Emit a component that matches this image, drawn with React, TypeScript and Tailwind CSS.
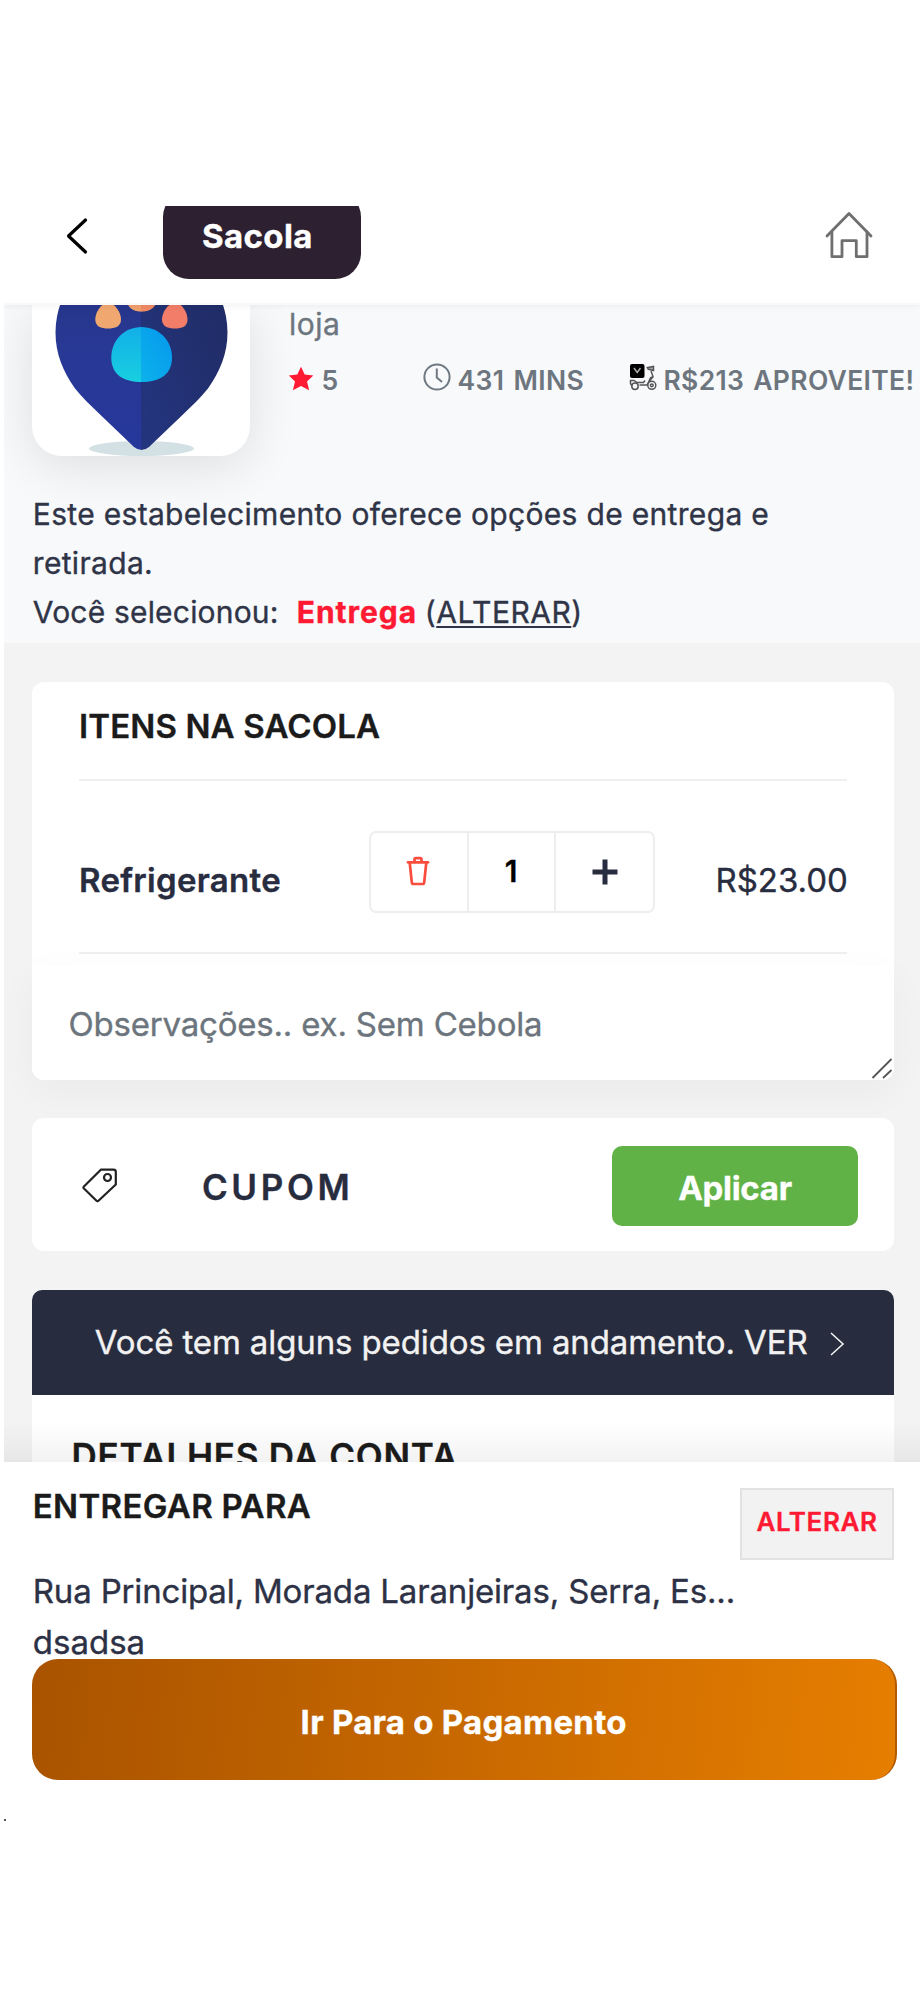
import React from "react";

function BackIcon() {
  return (
    <svg width="30" height="44" viewBox="0 0 30 44" fill="none" stroke="#000" strokeWidth="3.2" strokeLinecap="round" strokeLinejoin="round">
      <path d="M23.5 6 6.5 22l17 16" />
    </svg>
  );
}

function HomeIcon() {
  return (
    <svg width="50" height="50" viewBox="0 0 50 50" fill="none" stroke="#6f6f6f" strokeWidth="2.8" strokeLinecap="round" strokeLinejoin="round">
      <path d="M3 26 25 3.400 47 26" />
      <path d="M7.900 22V46.700H18V30.700H32.300V46.700H43V22" />
    </svg>
  );
}

function StoreLogo() {
  return (
    <svg width="218" height="152" viewBox="32 304.500 218 152">
      <defs>
        <linearGradient id="pinL" x1="0" y1="0" x2="0" y2="1">
          <stop offset="0" stopColor="#25327e" />
          <stop offset=".5" stopColor="#283895" />
          <stop offset="1" stopColor="#26379b" />
        </linearGradient>
        <linearGradient id="pinR" x1="1" y1="0" x2="0" y2="1">
          <stop offset="0" stopColor="#202b62" />
          <stop offset="1" stopColor="#243580" />
        </linearGradient>
        <linearGradient id="padL" x1="0" y1="0" x2="0" y2="1">
          <stop offset="0" stopColor="#12afe8" />
          <stop offset="1" stopColor="#18cfe0" />
        </linearGradient>
        <linearGradient id="padR" x1="1" y1="0" x2="0" y2="1">
          <stop offset="0" stopColor="#0597ee" />
          <stop offset="1" stopColor="#0cb2ea" />
        </linearGradient>
      </defs>
      <ellipse cx="141.500" cy="448" rx="52.500" ry="7.500" fill="#d3e1e4" />
      <path d="M142 246H141.500A86 86 0 0 0 55.500 332C55.500 353 63 371 75 388C82 397 91 405 99 413L134 446.500Q137.500 449.500 142 449.500Z" fill="url(#pinL)" />
      <path d="M141 246H141.500A86 86 0 0 1 227.500 332C227.500 353 220 371 208 388C201 397 192 405 184 413L149 446.500Q145.500 449.500 141 449.500Z" fill="url(#pinR)" />
      <path d="M142 326.500C123 326.500 111.300 341 111.300 357C111.300 374 123 381.500 142 381.500Z" fill="url(#padL)" />
      <path d="M141 326.500C160 326.500 172 341 172 357C172 374 160 381.500 141 381.500Z" fill="url(#padR)" />
      <path d="M108 302.500C101 302.500 95.300 312 95.300 319C95.300 326 101 328 108 328S121 326 121 319C121 312 115 302.500 108 302.500Z" fill="#f0a770" />
      <path d="M175 302.500C168 302.500 162 312 162 319C162 326 168 328 175 328S187.500 326 187.500 319C187.500 312 182 302.500 175 302.500Z" fill="#f27d68" />
      <path d="M128 304C130 309 135 311 142 311V304Z" fill="#f0a06c" />
      <path d="M155.500 304C153 309 148 311 141 311V304Z" fill="#ef8a66" />
    </svg>
  );
}

function StarIcon() {
  return (
    <svg width="26" height="25" viewBox="0 0 26 25" fill="#ff1a33">
      <path d="M13 .8 16.700 8.600 25.300 9.600 19 15.600 21.200 24.200 13 20 4.900 24.200 7 15.600 .8 9.600 9.300 8.600Z" />
    </svg>
  );
}

function ClockIcon() {
  return (
    <svg width="28" height="28" viewBox="0 0 28 28" fill="none" stroke="#6f7982" strokeWidth="2">
      <circle cx="14" cy="14" r="12.600" />
      <path d="M13.800 5.500V14.500L19 19" />
    </svg>
  );
}

function ScooterIcon() {
  return (
    <svg width="28" height="28" viewBox="0 0 28 28" fill="none" stroke="#555" strokeWidth="1.500">
      <rect x="1" y="1" width="14.500" height="14" rx="2" fill="#000" stroke="none" />
      <path d="M5 5 8.200 9.500 11.500 5" stroke="#aaa" strokeWidth="1.500" />
      <path d="M17.500 4.800 24.500 3.500V7.500L18.500 6" fill="#aaa" />
      <path d="M22 8 24 13.500 20 18.500 18 22H10.500" />
      <path d="M20 19C21 14.500 22.500 13 24 15" />
      <path d="M1.500 20V17.500H5L8 19.500H14.500L16 17.500" />
      <circle cx="6" cy="23.200" r="3.200" />
      <circle cx="22.800" cy="22.300" r="4" />
      <circle cx="22.800" cy="22.300" r="1.400" />
      <path d="M1.200 20 3 23" />
    </svg>
  );
}

function TrashIcon() {
  return (
    <svg width="24" height="30" viewBox="0 0 24 30" fill="none" stroke="#fb4d3d" strokeWidth="2.700" strokeLinejoin="round" strokeLinecap="round">
      <path d="M2 6.300H22" />
      <path d="M8.500 6V3.500Q8.500 2.200 9.800 2.200H14.200Q15.500 2.200 15.500 3.500V6" />
      <path d="M3.700 6.500 5.800 26.300Q6 28 7.500 28H16.500Q18 28 18.200 26.300L20.300 6.500" />
    </svg>
  );
}

function TagIcon() {
  return (
    <svg width="38" height="38" viewBox="0 0 38 38" fill="none" stroke="#222" strokeWidth="2.200" strokeLinejoin="round">
      <path d="M19.800 2.700H32.500Q34.800 2.700 34.800 5V17.500L17.500 33.800Q16.500 34.700 15.500 33.800L2.700 21.300Q2 20.500 2.700 19.700Z" />
      <circle cx="26.500" cy="10.500" r="3.500" />
    </svg>
  );
}

function Header() {
  return (
    <header className="relative z-10 h-[99px] shrink-0 border-b-2 border-[#f9f9f9] bg-white shadow-[0_1px_6px_rgba(0,0,0,0.06)]">
      <div className="flex h-full overflow-hidden">
        <button className="mt-2 ml-[58px] h-11">
          <BackIcon />
        </button>
        <div className="mt-[-15px] ml-[71.4px] h-[87.5px] w-[197.5px] shrink-0 rounded-[26px] bg-[#2d2030] pt-[24.5px] pl-[38.600px]">
          <span className="block text-[33px] leading-10 font-bold tracking-[0.4px] text-white">Sacola</span>
        </div>
        <button className="mt-[4px] mr-[46px] ml-auto h-[50px]">
          <HomeIcon />
        </button>
      </div>
    </header>
  );
}

function StoreInfo() {
  return (
    <section className="h-[338px] shrink-0 bg-[#f8f9fb] pl-[28.4px]">
      <div className="flex h-[151px]">
        <div className="w-[218px] shrink-0 overflow-hidden rounded-b-[30px] bg-white shadow-[0_10px_50px_rgba(0,0,0,0.11)]">
          <StoreLogo />
        </div>
        <div className="ml-[38.600px] whitespace-nowrap text-[#6d767e]">
          <p className="text-[30px] leading-[38px] tracking-[0.5px]">loja</p>
          <div className="mt-[20.7px] flex text-[26.5px] leading-8 font-semibold [-webkit-text-stroke:0px]">
            <div className="mt-[2px] -ml-px">
              <StarIcon />
            </div>
            <span className="ml-[7.5px] w-[101.5px]">5</span>
            <div className="-mt-[0.7px]">
              <ClockIcon />
            </div>
            <span className="ml-[6.5px] w-[171.5px] tracking-[0.4px] [word-spacing:2px]">431 MINS</span>
            <div className="-mt-[0.7px]">
              <ScooterIcon />
            </div>
            <span className="ml-[6.5px] tracking-[0.33px] [word-spacing:2px]">R$213 APROVEITE!</span>
          </div>
        </div>
      </div>
      <div className="relative mt-[34px] pl-[0.4px] text-[30px] leading-[49px] text-[#2f3447]">
        <p className="w-[780px] tracking-[0.32px]">Este estabelecimento oferece opções de entrega e retirada.</p>
        <p className="flex whitespace-nowrap">
          <span className="w-[264px] tracking-[0.19px]">Você selecionou:</span>
          <span className="w-[128px] font-bold tracking-[0.95px] text-[#ff1a33]">Entrega</span>
          <span className="tracking-[0.51px]">
            (<span className="underline decoration-2 underline-offset-[3px]">ALTERAR</span>)
          </span>
        </p>
      </div>
    </section>
  );
}

function ItemsCard() {
  return (
    <section className="mt-[39px] h-[397.5px] shrink-0 rounded-xl bg-white">
      <div className="px-[46.6px] pt-6">
        <h2 className="text-[33px] leading-10 font-semibold tracking-[0.12px] text-[#1b1b1b]">ITENS NA SACOLA</h2>
        <div className="mt-[33px] h-[2px] bg-[#f0f0f0]" />
        <div className="flex h-[171px] items-start text-[33px] leading-10 text-[#282c3f]">
          <span className="mt-[79px] w-[290px] font-semibold tracking-[0.3px]">Refrigerante</span>
          <div className="mt-[50px] flex h-[81.5px] w-[286.5px] rounded-[7px] border-2 border-[#eeeeee] text-[30px]">
            <button className="flex w-[96px] items-center justify-center pr-px pb-[2px]">
              <TrashIcon />
            </button>
            <div className="w-[89px] border-x-2 border-[#eeeeee] pt-[18px] pr-px text-center font-semibold text-black">1</div>
            <button className="flex grow items-center justify-center">
              <svg width="26" height="26" viewBox="0 0 26 26" fill="#282c3f">
                <path d="M10.500 .5H15.500V10.500H25.500V15.500H15.500V25.500H10.500V15.500H.5V10.500H10.500Z" />
              </svg>
            </button>
          </div>
          <span className="mt-[79px] -mr-[0.5px] ml-auto">R$23.00</span>
        </div>
        <div className="h-[2px] bg-[#f0f0f0]" />
      </div>
      <div className="mt-[11px] flex h-[114.5px] justify-between rounded-b-xl bg-white pt-[39px] pl-[36px] shadow-[0_12px_40px_rgba(0,0,0,0.04)]">
        <span className="text-[33px] leading-10 tracking-[-0.19px] text-[#6c757d]">Observações.. ex. Sem Cebola</span>
        <svg className="mr-px self-end" width="22" height="22" viewBox="0 0 22 22" stroke="#555" strokeWidth="1.800">
          <path d="M1.500 20 20.500 1M12 20 20.500 12" />
        </svg>
      </div>
    </section>
  );
}

function CouponCard() {
  return (
    <section className="relative mt-[38.5px] flex h-[133px] shrink-0 rounded-xl bg-white">
      <div className="mt-[49px] ml-[48.600px]">
        <TagIcon />
      </div>
      <span className="mt-[49px] ml-[83px] text-[35px] leading-10 font-semibold tracking-[3.6px] text-[#282c3f]">CUPOM</span>
      <button className="mt-[28px] mr-9 ml-auto h-20 w-[246px] rounded-[10px] bg-[#60b246] pt-[5px] text-[33px] font-bold tracking-[-0.29px] text-white">
        Aplicar
      </button>
    </section>
  );
}

function OrdersBanner() {
  return (
    <section className="mt-[39px] shrink-0 overflow-hidden rounded-t-[10px] bg-white">
      <div className="flex h-[105px] bg-[#282c3f] pt-[31.5px] pl-[62.4px]">
        <span className="text-[33px] leading-10 tracking-[-0.12px] whitespace-nowrap text-[#f2f2f2]">
          Você tem alguns pedidos em andamento. VER
        </span>
        <svg className="mt-[9.5px] ml-[20px]" width="18" height="26" viewBox="0 0 18 26" fill="none" stroke="#f0f0f0" strokeWidth="1.600">
          <path d="M3 2 15 13 3 24" />
        </svg>
      </div>
      <h2 className="h-[67px] pt-[40px] pl-[39px] text-[35px] leading-[42px] font-semibold tracking-[0.76px] whitespace-nowrap text-[#1b1b1b]">
        DETALHES DA CONTA
      </h2>
    </section>
  );
}

function CheckoutSheet() {
  return (
    <section className="h-[357px] shrink-0 bg-white pl-[28.4px]">
      <div className="flex h-[104px] justify-between pr-[26px] pl-[0.4px]">
        <h2 className="mt-[24px] text-[33px] leading-10 font-semibold tracking-[0.32px] text-[#1b1b1b]">ENTREGAR PARA</h2>
        <button className="mt-[25.5px] h-[72px] w-[154px] border-2 border-[#e2e2e2] bg-[#f2f2f2] pb-1 text-[26px] font-semibold tracking-[0.59px] text-[#ff1a33]">
          ALTERAR
        </button>
      </div>
      <p className="h-[51px] pl-[0.4px] text-[33px] leading-[51px] tracking-[-0.17px] text-[#2d3145]">
        Rua Principal, Morada Laranjeiras, Serra, Es...
      </p>
      <p className="h-[42.3px] pl-[0.4px] text-[33px] leading-[51px] text-[#2d3145]">dsadsa</p>
      <button className="relative block h-[121px] w-[864.5px] rounded-[26px] border-r-2 border-[#b25a00] bg-linear-[96deg,#a95300,#e67e00] pt-[5px] text-[33px] font-bold tracking-[0.26px] text-white">
        Ir Para o Pagamento
      </button>
    </section>
  );
}

export default function App() {
  return (
    <div className="flex h-[2000px] w-[924px] flex-col bg-white pt-[206px] pr-1 pl-1 font-[Inter,sans-serif] [-webkit-text-stroke:0.35px]">
      <div className="relative flex h-[1256px] flex-col overflow-hidden bg-[#f3f3f3]">
        <Header />
        <StoreInfo />
        <div className="flex flex-col pr-[26px] pl-[28.4px]">
          <ItemsCard />
          <CouponCard />
          <OrdersBanner />
        </div>
        <div className="absolute inset-x-0 bottom-0 h-10 bg-linear-to-t from-black/5 to-transparent" />
      </div>
      <CheckoutSheet />
      <div className="h-[2px] w-[2px] bg-[#555]" />
    </div>
  );
}
